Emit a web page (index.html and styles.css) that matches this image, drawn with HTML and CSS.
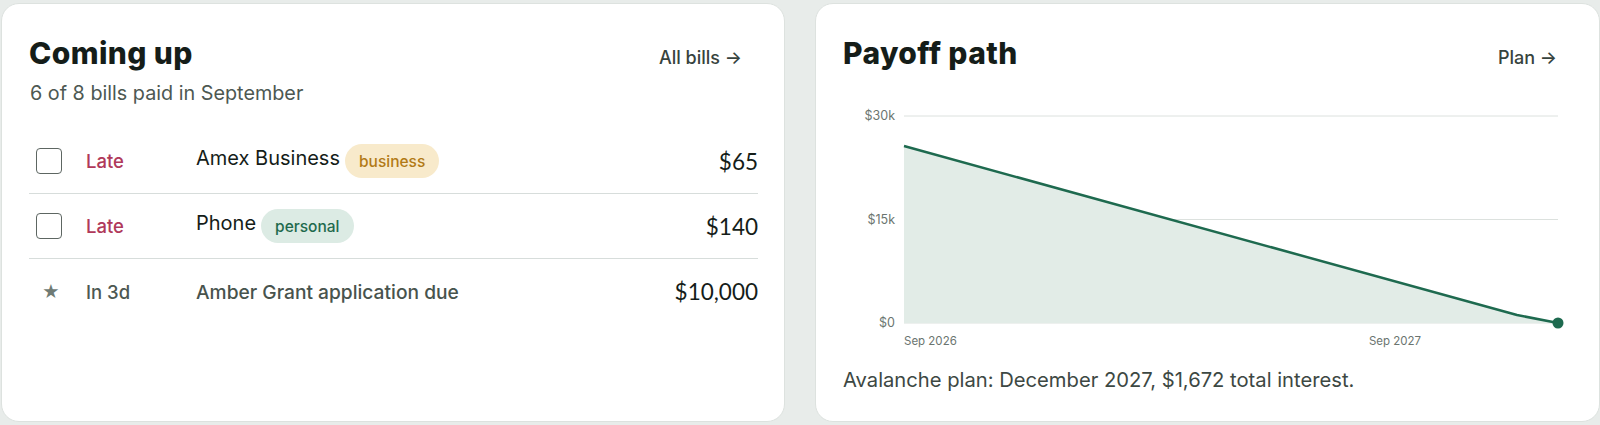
FILE: index.html
```html
<!DOCTYPE html>
<html lang="en">
<head>
<meta charset="utf-8">
<title>Dashboard</title>
<link rel="stylesheet" href="styles.css">
</head>
<body>
<main class="board">
  <section class="card">
    <header class="card-head">
      <div>
        <h2 class="title">Coming up</h2>
        <p class="subtitle">6 of 8 bills paid in September</p>
      </div>
      <a class="head-link" href="#">All bills →</a>
    </header>
    <ul class="bills">
      <li class="bill">
        <span class="check"></span>
        <span class="status late">Late</span>
        <span class="name">Amex Business <span class="tag tag-business">business</span></span>
        <span class="amount">$65</span>
      </li>
      <li class="bill">
        <span class="check"></span>
        <span class="status late">Late</span>
        <span class="name">Phone <span class="tag tag-personal">personal</span></span>
        <span class="amount">$140</span>
      </li>
      <li class="bill">
        <span class="star">★</span>
        <span class="status soon">In 3d</span>
        <span class="name muted">Amber Grant application due</span>
        <span class="amount">$10,000</span>
      </li>
    </ul>
  </section>
  <section class="card">
    <header class="card-head">
      <h2 class="title">Payoff path</h2>
      <a class="head-link" href="#">Plan →</a>
    </header>
    <svg class="chart" width="715" height="258" viewBox="0 0 715 258">
      <g class="grid">
        <line x1="61" y1="16" x2="715" y2="16"/>
        <line x1="61" y1="119.5" x2="715" y2="119.5"/>
        <line x1="61" y1="223" x2="715" y2="223"/>
      </g>
      <g class="ylab">
        <text x="52" y="20">$30k</text>
        <text x="52" y="123.5">$15k</text>
        <text x="52" y="227">$0</text>
      </g>
      <path class="area" d="M61 46 L674 215 L715 223 L61 223 Z"/>
      <path class="line" d="M61 46 L674 215 L715 223"/>
      <circle class="dot" cx="715" cy="223" r="5.5"/>
      <g class="xlab">
        <text x="61" y="245">Sep 2026</text>
        <text x="552" y="245" text-anchor="middle">Sep 2027</text>
      </g>
    </svg>
    <p class="summary">Avalanche plan: December 2027, $1,672 total interest.</p>
  </section>
</main>
</body>
</html>
```
FILE: styles.css
```css
* { box-sizing: border-box; }
html, body { margin: 0; padding: 0; }
body {
  background: #e8ecea;
  font-family: Inter, "Noto Sans", sans-serif;
  color: #17201c;
  width: 1600px;
  height: 425px;
  overflow: hidden;
}
.board {
  display: grid;
  grid-template-columns: 784px 785px;
  gap: 30px;
  padding: 3px 0 0 1px;
}
.card {
  background: #ffffff;
  border: 1px solid #dde2df;
  border-radius: 18px;
  height: 419px;
  padding: 32px 26px 0 27px;
}
.card-head {
  display: flex;
  justify-content: space-between;
  align-items: flex-start;
}
.title {
  margin: 0;
  font-size: 30px;
  line-height: 35px;
  font-weight: 800;
  letter-spacing: 0.4px;
  color: #151d19;
}
.subtitle {
  margin: 10px 0 0 1px;
  font-size: 19.8px;
  line-height: 24px;
  color: #4d5852;
}
.head-link {
  margin: 10px 16px 0 0;
  font-size: 18px;
  line-height: 24px;
  font-weight: 500;
  color: #37433d;
  text-decoration: none;
}
.bills {
  list-style: none;
  margin: 24px 0 0 0;
  padding: 0;
}
.bill {
  display: grid;
  grid-template-columns: 57px 110px 1fr auto;
  align-items: center;
  height: 65px;
  border-bottom: 1px solid #d7dddb;
}
.bill:last-child { border-bottom: none; }
.check {
  width: 26px;
  height: 26px;
  margin-left: 7px;
  border: 1.5px solid #5d6662;
  border-radius: 4px;
}
.star {
  margin-left: 13px;
  font-size: 17px;
  color: #6f7b75;
}
.status {
  font-size: 18.5px;
  font-weight: 500;
}
.late { color: #b0395a; }
.soon { color: #4d5852; }
.name {
  display: flex;
  align-items: center;
  gap: 5px;
  font-size: 20px;
  color: #151d19;
  margin-top: -6px;
}
.name.muted {
  color: #48534d;
  font-weight: 500;
  font-size: 19.2px;
  margin-top: 0;
}
.tag {
  display: inline-flex;
  align-items: center;
  height: 34px;
  padding: 0 14px;
  border-radius: 17px;
  font-size: 15.5px;
  font-weight: 500;
  margin-top: 6px;
}
.tag-business { background: #f8eacb; color: #b27a16; }
.tag-personal { background: #dcebe4; color: #1f6a4d; }
.amount {
  font-family: Lato, "Noto Sans", sans-serif;
  font-size: 22.5px;
  color: #151d19;
}
.chart {
  display: block;
  margin-top: 29px;
  overflow: visible;
}
.grid line { stroke: #dce1de; stroke-width: 1; }
.ylab text {
  font-family: Inter, sans-serif;
  font-size: 12.5px;
  fill: #6b7570;
  text-anchor: end;
}
.xlab text {
  font-family: Inter, sans-serif;
  font-size: 11.5px;
  fill: #6b7570;
}
.area { fill: #e2ece7; }
.line { fill: none; stroke: #1e6a4f; stroke-width: 2.5; stroke-linejoin: round; }
.dot { fill: #1e6a4f; }
.summary {
  margin: 9px 0 0 0;
  font-size: 20.2px;
  line-height: 26px;
  color: #3d4843;
}
```
